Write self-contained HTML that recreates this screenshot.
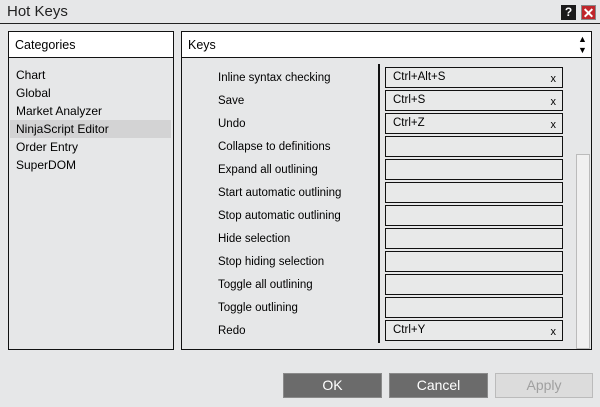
<!DOCTYPE html>
<html><head><style>
*{margin:0;padding:0;box-sizing:border-box}
body{width:600px;height:407px;background:#e6e7e8;font-family:"Liberation Sans",sans-serif;font-size:12px;color:#000;position:relative;overflow:hidden}
.a{position:absolute}
.row{position:absolute;left:218px;font-size:11.5px}
.kb{position:absolute;left:385px;width:178px;height:21px;border:1.5px solid #111;background:#e8e9e9;font-size:11.5px}
.kb b{position:absolute;left:7px;top:3px;font-weight:normal}
.kb span{position:absolute;right:6px;top:5px;font-size:11px}
.btn{position:absolute;top:373px;height:25px;background:#6b6b6b;border:1px solid #8a8a8a;color:#fff;font-size:14px;text-align:center;line-height:23px}
</style></head><body>
<div class="a" style="left:0;top:0;width:600px;height:24px;border-bottom:1px solid #222"></div>
<div class="a" style="left:7px;top:3px;font-size:15px;color:#222">Hot Keys</div>
<div class="a" style="left:561px;top:5px;width:15px;height:15px;background:#1a1a1a;color:#fff;font-weight:bold;font-size:12px;text-align:center;line-height:15px">?</div>
<div class="a" style="left:581px;top:5px;width:15px;height:15px;background:#c0262b;color:#fff;font-weight:bold;font-size:14px;text-align:center;line-height:15px;border:1px solid #888">✕</div>

<div class="a" style="left:8px;top:31px;width:166px;height:319px;border:1.5px solid #111"></div>
<div class="a" style="left:9px;top:32px;width:164px;height:26px;background:#fff;border-bottom:1px solid #111"></div>
<div class="a" style="left:15px;top:38px;font-size:12.5px">Categories</div>
<div class="a" style="left:16px;top:66px;line-height:18px;font-size:12px">Chart<br>Global<br>Market Analyzer</div>
<div class="a" style="left:10px;top:120px;width:161px;height:18px;background:#d3d3d4"></div>
<div class="a" style="left:16px;top:120px;line-height:18px;font-size:12px">NinjaScript Editor<br>Order Entry<br>SuperDOM</div>

<div class="a" style="left:181px;top:31px;width:411px;height:319px;border:1.5px solid #111"></div>
<div class="a" style="left:182px;top:32px;width:409px;height:26px;background:#fff;border-bottom:1px solid #111"></div>
<div class="a" style="left:188px;top:38px;font-size:12.5px">Keys</div>
<div class="a" style="left:578px;top:34px;font-size:9px;line-height:11px">▲<br>▼</div>
<div class="a" style="left:576px;top:154px;width:14px;height:195px;background:#f0f0f0;border:1px solid #bbb"></div>
<div class="a" style="left:378px;top:64px;width:1.5px;height:279px;background:#111"></div>

<div class="row" style="top:72px">Inline syntax checking</div>
<div class="row" style="top:95px">Save</div>
<div class="row" style="top:118px">Undo</div>
<div class="row" style="top:141px">Collapse to definitions</div>
<div class="row" style="top:164px">Expand all outlining</div>
<div class="row" style="top:187px">Start automatic outlining</div>
<div class="row" style="top:210px">Stop automatic outlining</div>
<div class="row" style="top:233px">Hide selection</div>
<div class="row" style="top:256px">Stop hiding selection</div>
<div class="row" style="top:279px">Toggle all outlining</div>
<div class="row" style="top:302px">Toggle outlining</div>
<div class="row" style="top:325px">Redo</div>

<div class="kb" style="top:67px"><b>Ctrl+Alt+S</b><span>x</span></div>
<div class="kb" style="top:90px"><b>Ctrl+S</b><span>x</span></div>
<div class="kb" style="top:113px"><b>Ctrl+Z</b><span>x</span></div>
<div class="kb" style="top:136px"></div>
<div class="kb" style="top:159px"></div>
<div class="kb" style="top:182px"></div>
<div class="kb" style="top:205px"></div>
<div class="kb" style="top:228px"></div>
<div class="kb" style="top:251px"></div>
<div class="kb" style="top:274px"></div>
<div class="kb" style="top:297px"></div>
<div class="kb" style="top:320px"><b>Ctrl+Y</b><span>x</span></div>

<div class="btn" style="left:283px;width:99px">OK</div>
<div class="btn" style="left:389px;width:99px">Cancel</div>
<div class="btn" style="left:495px;width:98px;background:#dcdcdc;border-color:#bbb;color:#a0a0a0">Apply</div>
</body></html>
